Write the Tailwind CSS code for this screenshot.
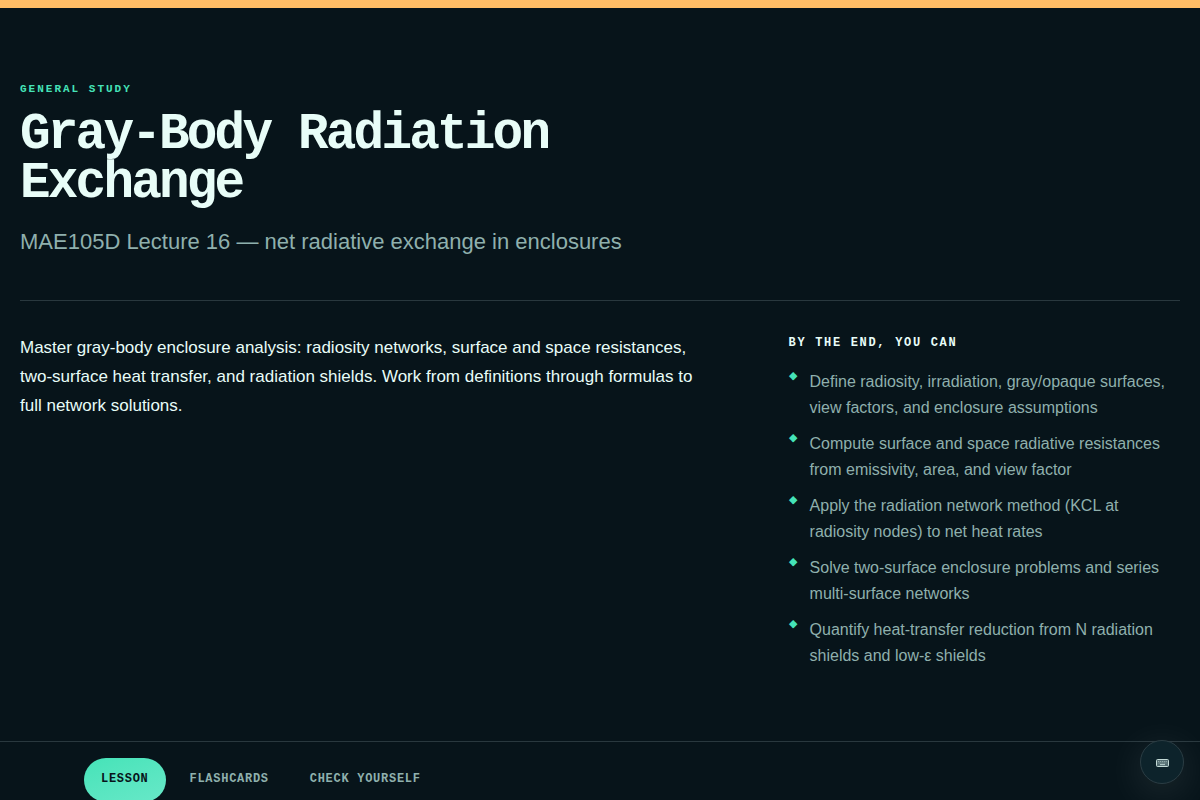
<!DOCTYPE html>
<html lang="en">
<head>
  <meta charset="UTF-8" />
  <meta name="viewport" content="width=device-width, initial-scale=1" />
  <title>Gray-Body Radiation Exchange</title>
  <script src="https://cdn.jsdelivr.net/npm/@tailwindcss/browser@4"></script>
</head>
<body class="min-h-screen overflow-x-hidden border-t-8 border-[#ffbd66] bg-[#07141a] font-['Liberation_Sans',sans-serif] text-[#e8fdf8]">
  <!-- Hero -->
  <header class="mx-5 border-b border-[#29383e] pt-[72px] pb-10">
    <p class="font-['Liberation_Mono',monospace] text-[11px] leading-[18px] font-bold tracking-[2px] text-[#45e3b8] uppercase">General Study</p>
    <h1 class="mt-3 max-w-[640px] font-['Liberation_Mono',monospace] text-[51px] leading-[49px] font-bold tracking-[-0.055em]">Gray-Body Radiation Exchange</h1>
    <p class="mt-4 text-[22px] leading-9 text-[#8fb0ad]">MAE105D Lecture 16 — net radiative exchange in enclosures</p>
  </header>

  <!-- Intro and goals -->
  <main class="mx-5 grid gap-8 pt-8 pb-[72px] md:grid-cols-[1.8fr_1fr] md:gap-16">
    <p class="max-w-[690px] text-[17px] leading-[29px]">
      Master gray-body enclosure analysis: radiosity networks, surface and space resistances, two-surface heat transfer, and radiation shields. Work from definitions through formulas to full network solutions.
    </p>
    <section>
      <h2 class="font-['Liberation_Mono',monospace] text-xs leading-5 font-bold tracking-[0.14em] uppercase">By the end, you can</h2>
      <ul class="mt-4 space-y-[10px] text-base leading-[26px] text-[#8fb0ad]">
        <li class="flex gap-3"><span class="w-[9px] shrink-0 text-[11px] leading-3 text-[#45e3b8]">◆</span>Define radiosity, irradiation, gray/opaque surfaces, view factors, and enclosure assumptions</li>
        <li class="flex gap-3"><span class="w-[9px] shrink-0 text-[11px] leading-3 text-[#45e3b8]">◆</span>Compute surface and space radiative resistances from emissivity, area, and view factor</li>
        <li class="flex gap-3"><span class="w-[9px] shrink-0 text-[11px] leading-3 text-[#45e3b8]">◆</span>Apply the radiation network method (KCL at radiosity nodes) to net heat rates</li>
        <li class="flex gap-3"><span class="w-[9px] shrink-0 text-[11px] leading-3 text-[#45e3b8]">◆</span>Solve two-surface enclosure problems and series multi-surface networks</li>
        <li class="flex gap-3"><span class="w-[9px] shrink-0 text-[11px] leading-3 text-[#45e3b8]">◆</span>Quantify heat-transfer reduction from N radiation shields and low-ε shields</li>
      </ul>
    </section>
  </main>

  <!-- Tabs -->
  <nav class="border-t border-[#29383e] px-5 py-4 md:px-[84px]">
    <div class="flex gap-[7px] font-['Liberation_Mono',monospace] text-xs font-bold tracking-[0.06em] text-[#8fb0ad]">
      <button type="button" class="h-11 rounded-full bg-linear-160 from-[#45e3b8] to-[#67e8c8] px-[17px] pb-[2px] text-[#07141a] uppercase">Lesson</button>
      <button type="button" class="h-11 rounded-full px-[17px] pb-[2px] uppercase">Flashcards</button>
      <button type="button" class="h-11 rounded-full px-[17px] pb-[2px] uppercase">Check yourself</button>
    </div>
  </nav>

  <button type="button" aria-label="Keyboard shortcuts" class="fixed right-4 bottom-4 flex size-11 items-center justify-center rounded-full border border-[#2b3d44] bg-[#0d232b] pt-[2px] shadow-[0_8px_40px_rgba(255,255,255,0.12)]">
    <svg class="h-2 w-[13px]" viewBox="0 0 13 8" fill="none" stroke="#c3dad6">
      <rect x="0.5" y="0.5" width="12" height="7" rx="1" fill="#526b70" />
      <path d="M2 2.5h9M2.5 4h8" stroke="#a3bbb9" stroke-width="0.8" stroke-dasharray="1.2 0.7" />
      <path d="M4 5.6h5" stroke-width="0.9" />
    </svg>
  </button>
</body>
</html>
